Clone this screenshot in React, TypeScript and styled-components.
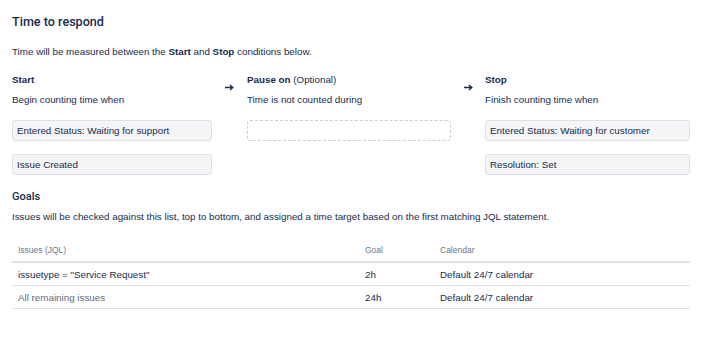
import React from 'react';
import styled, { createGlobalStyle } from 'styled-components';

const GlobalStyle = createGlobalStyle`
  body {
    margin: 0;
    background: #ffffff;
    font-family: "Liberation Sans", Arial, sans-serif;
    color: #172b4d;
  }
`;

const Page = styled.div`
  width: 678px;
  padding: 14px 0 20px 12px;
`;

const Title = styled.h3`
  margin: 0;
  font-family: Roboto, "Liberation Sans", sans-serif;
  font-size: 12.6px;
  line-height: 16px;
  font-weight: 500;
`;

const Text = styled.p<{ top?: number }>`
  margin: ${(p) => p.top ?? 0}px 0 0;
  font-size: 9.8px;
  line-height: 14px;
`;

const Conditions = styled.div`
  display: grid;
  grid-template-columns: 200px 35px 204px 34px 1fr;
  margin-top: 14px;
`;

const Column = styled.div`
  display: flex;
  flex-direction: column;
`;

const Label = styled.div`
  font-size: 9.8px;
  line-height: 14px;
  font-weight: bold;

  span {
    font-weight: normal;
  }
`;

const Hint = styled.div`
  margin-top: 6px;
  font-size: 9.8px;
  line-height: 14px;
`;

const ArrowCell = styled.div`
  display: flex;
  justify-content: center;
  padding-top: 11px;
`;

const Condition = styled.div`
  margin-top: 13px;
  height: 21px;
  box-sizing: border-box;
  padding: 0 4px;
  display: flex;
  align-items: center;
  font-size: 9.8px;
  background: #f4f5f7;
  border: 1px solid #dfe1e6;
  border-radius: 3px;
`;

const EmptySlot = styled.div`
  margin-top: 13px;
  height: 21px;
  box-sizing: border-box;
  border: 1px dashed #ccd0d6;
  border-radius: 3px;
`;

const SectionTitle = styled.h4`
  margin: 15px 0 0;
  font-family: Roboto, "Liberation Sans", sans-serif;
  font-size: 11px;
  line-height: 14px;
  font-weight: 500;
`;

const Table = styled.div`
  margin-top: 15px;
  display: grid;
  grid-template-columns: 347px 75px 1fr;
`;

const HeadCell = styled.div`
  height: 22px;
  padding: 0 6px;
  display: flex;
  align-items: center;
  font-size: 8.5px;
  color: #6b778c;
  border-bottom: 2px solid #dfe1e6;
`;

const Cell = styled.div<{ muted?: boolean }>`
  height: 22px;
  padding: 0 6px;
  display: flex;
  align-items: center;
  font-size: 9.8px;
  color: ${(p) => (p.muted ? '#5e6c84' : '#172b4d')};
  border-bottom: 1px solid #dfe1e6;
`;

const Arrow = () => (
  <svg width="9" height="7" viewBox="0 0 9 7">
    <path d="M0 3.5H7.5M5 1L7.8 3.5L5 6" fill="none" stroke="#172b4d" strokeWidth="1.4" />
  </svg>
);

const goals = [
  { jql: 'issuetype = "Service Request"', goal: '2h', calendar: 'Default 24/7 calendar', muted: false },
  { jql: 'All remaining issues', goal: '24h', calendar: 'Default 24/7 calendar', muted: true },
];

const App = () => (
  <>
    <GlobalStyle />
    <Page>
      <Title>Time to respond</Title>
      <Text top={15}>
        Time will be measured between the <b>Start</b> and <b>Stop</b> conditions below.
      </Text>
      <Conditions>
        <Column>
          <Label>Start</Label>
          <Hint>Begin counting time when</Hint>
          <Condition>Entered Status: Waiting for support</Condition>
          <Condition>Issue Created</Condition>
        </Column>
        <ArrowCell><Arrow /></ArrowCell>
        <Column>
          <Label>Pause on <span>(Optional)</span></Label>
          <Hint>Time is not counted during</Hint>
          <EmptySlot />
        </Column>
        <ArrowCell><Arrow /></ArrowCell>
        <Column>
          <Label>Stop</Label>
          <Hint>Finish counting time when</Hint>
          <Condition>Entered Status: Waiting for customer</Condition>
          <Condition>Resolution: Set</Condition>
        </Column>
      </Conditions>
      <SectionTitle>Goals</SectionTitle>
      <Text top={6}>
        Issues will be checked against this list, top to bottom, and assigned a time target based on the first matching JQL statement.
      </Text>
      <Table>
        <HeadCell>Issues (JQL)</HeadCell>
        <HeadCell>Goal</HeadCell>
        <HeadCell>Calendar</HeadCell>
        {goals.map((g) => (
          <React.Fragment key={g.jql}>
            <Cell muted={g.muted}>{g.jql}</Cell>
            <Cell>{g.goal}</Cell>
            <Cell>{g.calendar}</Cell>
          </React.Fragment>
        ))}
      </Table>
    </Page>
  </>
);

export default App;
